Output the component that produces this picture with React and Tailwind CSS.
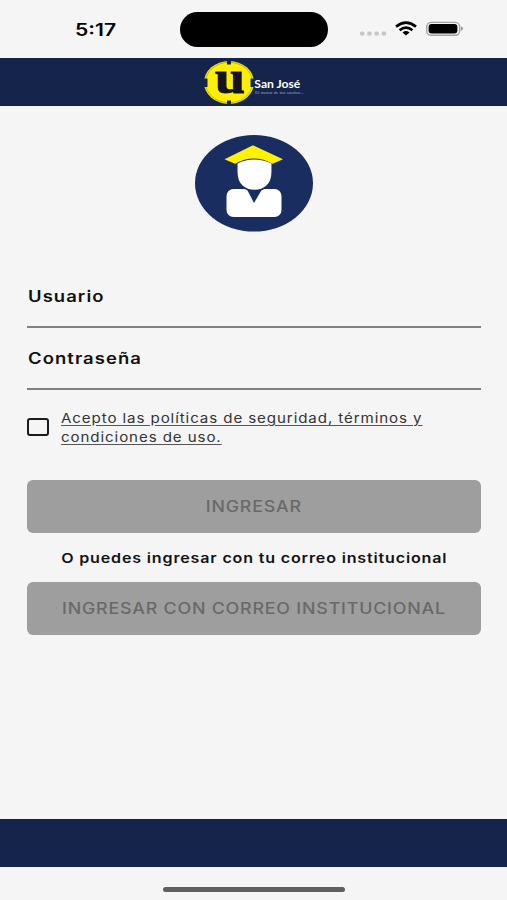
import { useState } from "react";

function StatusBar() {
    return (
        <div className="flex h-[58px] shrink-0 items-start">
            <div className="w-[180px] pl-[75px] pt-[18px]">
                <span className="inline-block origin-left scale-x-[1.24] whitespace-nowrap text-[17px] leading-6 font-semibold text-black">
                    5:17
                </span>
            </div>
            <div className="mt-[12px] h-[35px] w-[148px] rounded-full bg-black" />
            <svg className="ml-[32px] mt-[20px]" width="104" height="18" viewBox="0 0 104 18">
                {/* signal */}
                <g fill="#c6c6c6">
                    <rect x="0" y="11.5" width="4.5" height="4" rx="1.5" />
                    <rect x="7.2" y="11.5" width="4.5" height="4" rx="1.5" />
                    <rect x="14.4" y="11.5" width="4.5" height="4" rx="1.5" />
                    <rect x="21.6" y="11.5" width="4.5" height="4" rx="1.5" />
                </g>
                {/* wifi */}
                <g fill="none" stroke="#000" strokeWidth="2.7">
                    <path d="M36 6.6 Q46 -1.2 56 6.6" />
                    <path d="M39.6 10.2 Q46 5 52.4 10.2" />
                </g>
                <path d="M42.5 12.4 Q46 9.8 49.5 12.4 L46 15.4Z" fill="#000" />
                {/* battery */}
                <rect x="66.7" y="2.4" width="33" height="12.8" rx="4.5" fill="none" stroke="#a3a3a3" strokeWidth="1.4" />
                <rect x="68.6" y="4" width="28.8" height="9.6" rx="3" fill="#000" />
                <path d="M101 6.6 Q103 7 103 8.7 Q103 10.4 101 10.8Z" fill="#999" />
            </svg>
        </div>
    );
}

function Logo() {
    return (
        <svg className="overflow-visible" width="104" height="48" viewBox="0 0 104 48">
            <ellipse cx="26" cy="24.5" rx="25" ry="21.5" fill="#ffee05" />
            <ellipse cx="26" cy="24.5" rx="23.6" ry="20.2" fill="none" stroke="#a39b0e" strokeWidth="0.7" />
            <g fill="#15244b">
                <rect x="24" y="2" width="4" height="4.5" />
                <rect x="24" y="42.5" width="4" height="4.5" />
                <rect x="0" y="20.5" width="4.5" height="8.5" />
                <rect x="47.5" y="20.5" width="4.5" height="8.5" />
            </g>
            <text
                x="12"
                y="34.5"
                textLength="30"
                lengthAdjust="spacingAndGlyphs"
                fill="#15151b"
                stroke="#15151b"
                strokeWidth="1"
                className="font-['Liberation_Serif'] text-[46px] font-bold"
            >
                u
            </text>
            <text x="51.3" y="29.5" textLength="46" lengthAdjust="spacingAndGlyphs" fill="#fff" className="font-['Lato'] text-[11px] font-bold">
                San José
            </text>
            <text x="52" y="36" textLength="49" lengthAdjust="spacingAndGlyphs" fill="#9ba5bd" className="font-['Liberation_Serif'] text-[5px]">
                El motor de tus sueños...
            </text>
        </svg>
    );
}

function Avatar() {
    return (
        <svg width="118" height="97" viewBox="0 0 118 97">
            <ellipse cx="59" cy="48.3" rx="59" ry="48.3" fill="#1a2d60" />
            <rect x="31.5" y="54" width="55" height="28" rx="7" fill="#fff" />
            <path d="M51.5 53.5 H67.5 L59 68Z" fill="#1a2d60" />
            <path
                d="M41.8 28 Q59 19.5 77.2 28 V37 C77.2 50 69 55.5 59.5 55.5 C50 55.5 41.8 50 41.8 37Z"
                fill="#fff"
                stroke="#1a2d60"
                strokeWidth="1.5"
            />
            <path d="M29.5 24.3 L58 10.3 L88 24.3 L77.5 28.8 Q59 18 40 28.8Z" fill="#fff200" />
        </svg>
    );
}

function Field({ label, type }) {
    return (
        <label className="relative block h-[62px] border-b-2 border-[#808080]">
            <span className="absolute left-px top-[21px] inline-block origin-left scale-x-[1.19] whitespace-nowrap text-[15.5px] leading-5 font-semibold tracking-[0.9px] text-[#111]">
                {label}
            </span>
            <input type={type} className="h-full w-full bg-transparent pt-5 outline-none" />
        </label>
    );
}

function LoginButton({ children, disabled }) {
    return (
        <button
            type="button"
            disabled={disabled}
            className="flex h-[53px] w-full items-center justify-center rounded-[6px] bg-[#9e9e9e] text-[#696969]"
        >
            <span className="inline-block scale-x-[1.15] whitespace-nowrap pt-px text-[15.5px] leading-5 font-medium tracking-[0.7px]">
                {children}
            </span>
        </button>
    );
}

export default function App() {
    const [accepted, setAccepted] = useState(false);

    return (
        <div className="flex h-[900px] w-[507px] flex-col overflow-hidden bg-[#f5f5f5] font-['Inter',sans-serif]">
            <StatusBar />

            <header className="flex h-[48px] shrink-0 bg-[#15244b] pl-[203px]">
                <Logo />
            </header>

            <main className="flex grow flex-col pl-[27px] pr-[26px] pt-[29px]">
                <div className="flex h-[97px] pl-[168px]">
                    <Avatar />
                </div>

                <div className="mt-[34px]">
                    <Field label="Usuario" type="text" />
                    <Field label="Contraseña" type="password" />
                </div>

                {/* Terms */}
                <div className="mt-[19px] flex h-[40px]">
                    <button
                        type="button"
                        role="checkbox"
                        aria-checked={accepted}
                        aria-label="Acepto las políticas"
                        onClick={() => setAccepted(!accepted)}
                        className="mt-[9px] h-[18px] w-[22px] rounded-[3px] border-2 border-[#1b1b1b]"
                    />
                    <a
                        href="#"
                        className="ml-[12px] block origin-left scale-x-[1.12] whitespace-nowrap text-[13.5px] leading-[19px] tracking-[0.8px] text-[#333] underline decoration-[#555] underline-offset-2"
                    >
                        Acepto las políticas de seguridad, términos y
                        <br />
                        condiciones de uso.
                    </a>
                </div>

                <div className="mt-[31px]">
                    <LoginButton disabled={!accepted}>INGRESAR</LoginButton>
                    <p className="flex h-[49px] items-center justify-center">
                        <span className="inline-block scale-x-[1.19] whitespace-nowrap text-[13.5px] leading-5 font-semibold tracking-[0.7px] text-[#111]">
                            O puedes ingresar con tu correo institucional
                        </span>
                    </p>
                    <LoginButton disabled={!accepted}>INGRESAR CON CORREO INSTITUCIONAL</LoginButton>
                </div>
            </main>

            <footer className="h-[48px] shrink-0 bg-[#15244b]" />
            <div className="flex h-[33px] shrink-0 pl-[163px] pt-[20px]">
                <div className="h-[5px] w-[182px] rounded-full bg-[#606060]" />
            </div>
        </div>
    );
}
